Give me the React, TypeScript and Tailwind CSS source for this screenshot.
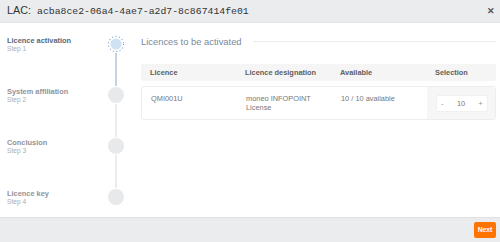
import React from "react";

const steps = [
  { title: "Licence activation", sub: "Step 1", active: true },
  { title: "System affiliation", sub: "Step 2", active: false },
  { title: "Conclusion", sub: "Step 3", active: false },
  { title: "Licence key", sub: "Step 4", active: false },
];

function ActiveDot() {
  return (
    <svg width="18" height="18" viewBox="0 0 18 18" className="block">
      <circle cx="9" cy="9" r="5.6" fill="#cfe2f3" />
      <circle
        cx="9"
        cy="9"
        r="7.6"
        fill="none"
        stroke="#7ea6cf"
        strokeWidth="1.1"
        strokeDasharray="1.1 2.4"
      />
    </svg>
  );
}

export default function App() {
  return (
    <div
      className="w-[500px] h-[242px] flex flex-col bg-white overflow-hidden"
      style={{ fontFamily: '"Liberation Sans", Arial, sans-serif' }}
    >
      {/* Header */}
      <div className="h-[23px] shrink-0 bg-[#ebecee] flex items-center justify-between pl-[7px] pr-[5px] border-b border-[#e2e3e5]">
        <div className="flex items-baseline gap-[6px] text-[#333]">
          <span className="text-[10.8px] leading-none">LAC:</span>
          <span
            className="text-[9.8px] leading-none"
            style={{ fontFamily: '"Liberation Mono", "DejaVu Sans Mono", monospace' }}
          >
            acba8ce2-06a4-4ae7-a2d7-8c867414fe01
          </span>
        </div>
        <span className="text-[9px] leading-none font-bold text-[#555]">✕</span>
      </div>

      {/* Main */}
      <div className="flex-1 flex min-h-0">
        {/* Steps */}
        <div className="w-[141px] shrink-0 pt-[12px] pl-[7px] flex flex-col">
          {steps.map((s, i) => (
            <div key={s.title} className="flex">
              <div className="w-[100px] pt-[1px]">
                <div
                  className={
                    "text-[7.4px] leading-[9px] font-bold " +
                    (s.active ? "text-[#56687a]" : "text-[#909398]")
                  }
                >
                  {s.title}
                </div>
                <div className="text-[6.6px] leading-[8.5px] text-[#aaadb0]">{s.sub}</div>
              </div>
              <div className="w-[18px] flex flex-col items-center">
                {s.active ? (
                  <ActiveDot />
                ) : (
                  <div className="w-[16px] h-[16px] my-[1px] rounded-full bg-[#e8e9eb]" />
                )}
                {i < steps.length - 1 && (
                  <div
                    className={
                      "w-[2px] h-[33px] " + (s.active ? "bg-[#c6d3e0]" : "bg-[#ebecee]")
                    }
                  />
                )}
              </div>
            </div>
          ))}
        </div>

        {/* Content */}
        <div className="flex-1 pr-[4px] pt-[13px]">
          <div className="flex items-center gap-[11px] h-[11px]">
            <span className="text-[9.4px] leading-[11px] text-[#7a8a9b] whitespace-nowrap">
              Licences to be activated
            </span>
            <div className="flex-1 h-px bg-[#ececec]" />
          </div>

          {/* Table header */}
          <div className="mt-[17px] h-[17px] bg-[#f5f5f5] rounded-[2px] grid grid-cols-[95px_95px_95px_1fr] items-center text-[7.4px] font-bold text-[#5e5e5e]">
            <div className="pl-[9px]">Licence</div>
            <div className="pl-[9px]">Licence designation</div>
            <div className="pl-[9px]">Available</div>
            <div className="pl-[9px]">Selection</div>
          </div>

          {/* Table row */}
          <div className="mt-[5px] h-[34px] border border-[#ededed] rounded-[3px] grid grid-cols-[95px_95px_95px_1fr] text-[7.4px] leading-[9px] text-[#777] overflow-hidden">
            <div className="pl-[9px] pt-[7px]">QMI001U</div>
            <div className="pl-[9px] pt-[7px] pr-[4px]">moneo INFOPOINT License</div>
            <div className="pl-[9px] pt-[7px]">10 / 10 available</div>
            <div className="bg-[#f6f6f6] pl-[9px] pt-[8px]">
              <div className="w-[52px] h-[17px] bg-white rounded-[2px] border border-[#f0f0f0] flex items-center justify-between px-[4px] text-[#999]">
                <span className="text-[8px]">-</span>
                <span className="text-[7.4px] text-[#777]">10</span>
                <span className="text-[8px]">+</span>
              </div>
            </div>
          </div>
        </div>
      </div>

      {/* Footer */}
      <div className="h-[25px] shrink-0 bg-[#ebecee] border-t border-[#e0e1e3] flex items-center justify-end pr-[4px]">
        <button className="w-[22px] h-[16px] rounded-[2px] bg-[#ff7300] text-white text-[6.8px] font-bold leading-none flex items-center justify-center">
          Next
        </button>
      </div>
    </div>
  );
}
